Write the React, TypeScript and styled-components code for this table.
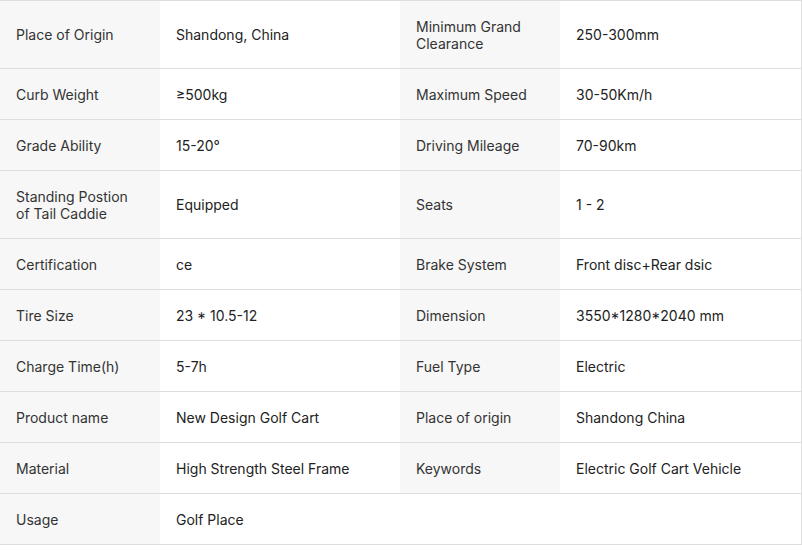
import React from "react";
import styled, { createGlobalStyle } from "styled-components";

const GlobalStyle = createGlobalStyle`
  body {
    margin: 0;
    background: #fff;
    font-family: Inter, "Noto Sans", Arial, sans-serif;
  }
`;

type Spec = [string, string];

const rows: [Spec, Spec | null][] = [
  [["Place of Origin", "Shandong, China"], ["Minimum Grand Clearance", "250-300mm"]],
  [["Curb Weight", "≥500kg"], ["Maximum Speed", "30-50Km/h"]],
  [["Grade Ability", "15-20°"], ["Driving Mileage", "70-90km"]],
  [["Standing Postion of Tail Caddie", "Equipped"], ["Seats", "1 - 2"]],
  [["Certification", "ce"], ["Brake System", "Front disc+Rear dsic"]],
  [["Tire Size", "23 * 10.5-12"], ["Dimension", "3550*1280*2040 mm"]],
  [["Charge Time(h)", "5-7h"], ["Fuel Type", "Electric"]],
  [["Product name", "New Design Golf Cart"], ["Place of origin", "Shandong China"]],
  [["Material", "High Strength Steel Frame"], ["Keywords", "Electric Golf Cart Vehicle"]],
  [["Usage", "Golf Place"], null],
];

const App = () => {
  return (
    <>
      <GlobalStyle />
      <SpecTable>
        <colgroup>
          <col style={{ width: 160 }} />
          <col style={{ width: 240 }} />
          <col style={{ width: 160 }} />
          <col style={{ width: 241 }} />
        </colgroup>
        <tbody>
          {rows.map(([left, right], i) => (
            <Row key={i}>
              <Cell $label>{left[0]}</Cell>
              <Cell>{left[1]}</Cell>
              {right ? (
                <>
                  <Cell $label>{right[0]}</Cell>
                  <Cell>{right[1]}</Cell>
                </>
              ) : (
                <>
                  <Cell />
                  <Cell />
                </>
              )}
            </Row>
          ))}
        </tbody>
      </SpecTable>
    </>
  );
};

export default App;

const SpecTable = styled.table`
  width: 801px;
  table-layout: fixed;
  border-collapse: collapse;
  border-top: 1px solid #dedede;
  border-right: 1px solid #dedede;
  font-size: 14px;
  line-height: 17px;
`;

const Row = styled.tr`
  border-bottom: 1px solid #dedede;
`;

const Cell = styled.td<{ $label?: boolean }>`
  padding: 16.5px 16px;
  vertical-align: middle;
  background: ${(p) => (p.$label ? "#f7f7f7" : "#fff")};
  color: ${(p) => (p.$label ? "#333" : "#222")};
`;
